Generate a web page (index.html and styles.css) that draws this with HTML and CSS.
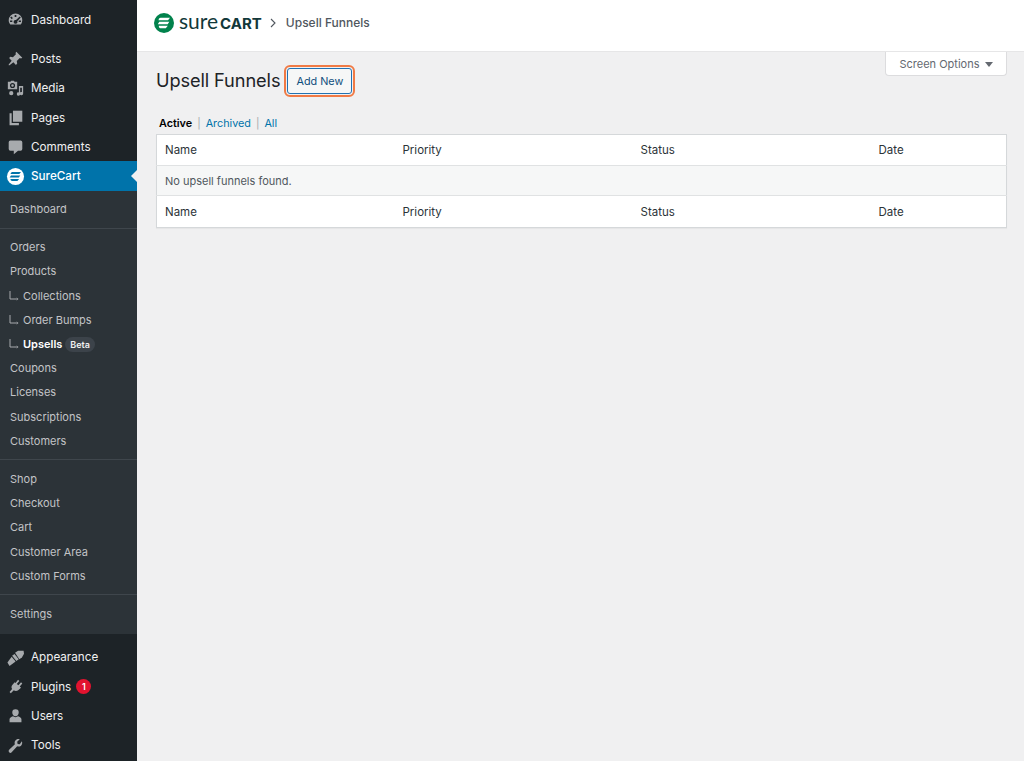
FILE: index.html
```html
<!DOCTYPE html>
<html lang="en">
<head>
<meta charset="utf-8">
<title>Upsell Funnels</title>
<link rel="stylesheet" href="styles.css">
</head>
<body>
<div class="app">
  <nav class="sidebar">
    <a class="top first"><svg class="ico" viewBox="0 0 20 20"><path d="M10 3a8 8 0 0 0-8 8c0 2 .7 3.700 1.900 5h12.200A8 8 0 0 0 18 11a8 8 0 0 0-8-8zM9 4.700h2v2.500H9zM5 6.500l1.900 1.800-1.300 1.300-1.800-1.900zm10 0 1.200 1.200-4.100 4.500a2.200 2.200 0 1 1-1.500-1.500zM3.600 11.200h2.600v1.800H3.600zm10.200 0h2.600v1.800h-2.600z" fill-rule="evenodd"/></svg>Dashboard</a>
    <a class="top gap"><svg class="ico" viewBox="0 0 20 20"><path d="M11 2l7 7-1.500 1-1.500-.5-3.500 3.500.5 3-1.500 1.500-3-3L3 18l-1 0 0-1 3.500-4.500-3-3L4 8l3 .5L10.500 5 10 3.500z"/></svg>Posts</a>
    <a class="top"><svg class="ico" viewBox="0 0 20 20"><path d="M1 2h3l1-1h3l1 1h3v9H1zM6.500 3.500a3 3 0 1 0 0 6 3 3 0 0 0 0-6z M6.500 5a1.500 1.500 0 1 1 0 3 1.500 1.500 0 0 1 0-3z" fill-rule="evenodd"/><path d="M14 7h5v9a2 2 0 1 1-1.500-1.900V9H15.500v7.500a2 2 0 1 1-1.500-1.900zM5 13a2.500 2.500 0 1 1 0 5 2.500 2.500 0 0 1 0-5z"/></svg>Media</a>
    <a class="top"><svg class="ico" viewBox="0 0 20 20"><path d="M7 2h11v13H7z"/><path d="M3 5h2.500v11.500H14V19H3z"/></svg>Pages</a>
    <a class="top"><svg class="ico" viewBox="0 0 20 20"><path d="M4 3h12a2 2 0 0 1 2 2v8a2 2 0 0 1-2 2h-3l-5 4v-4H4a2 2 0 0 1-2-2V5a2 2 0 0 1 2-2z"/></svg>Comments</a>
    <a class="top current"><svg class="ico-sc" viewBox="0 0 20 20"><circle cx="10" cy="10" r="9" fill="#fff"/><path d="M6.500 5.200h9.300l-1.800 2.200H4.800a2.200 2.200 0 0 1 1.700-2.200zM5.300 8.900h9.700l-1.500 2.200H3.800zM4.600 12.600h9.200l-1.800 2.200H6.200a2.200 2.200 0 0 1-1.600-2.200z" fill="#0073aa"/></svg>SureCart</a>
    <div class="sub">
      <a>Dashboard</a>
      <hr>
      <a>Orders</a>
      <a>Products</a>
      <a class="child"><svg class="elbow" viewBox="0 0 10 10"><path d="M1 0v8h6"/><path d="M7.500 6.500l2 1.500-2 1.500z"/></svg>Collections</a>
      <a class="child"><svg class="elbow" viewBox="0 0 10 10"><path d="M1 0v8h6"/><path d="M7.500 6.500l2 1.500-2 1.500z"/></svg>Order Bumps</a>
      <a class="child on"><svg class="elbow" viewBox="0 0 10 10"><path d="M1 0v8h6"/><path d="M7.500 6.500l2 1.500-2 1.500z"/></svg>Upsells<span class="beta">Beta</span></a>
      <a>Coupons</a>
      <a>Licenses</a>
      <a>Subscriptions</a>
      <a>Customers</a>
      <hr>
      <a>Shop</a>
      <a>Checkout</a>
      <a>Cart</a>
      <a>Customer Area</a>
      <a>Custom Forms</a>
      <hr>
      <a>Settings</a>
    </div>
    <a class="top after"><svg class="ico" viewBox="0 0 20 20"><path d="M9.500 4.500 13 2h6.500l.5 3.500L17.500 10l-3 2z"/><path d="M8.800 5.800l5 6.400L11 14 6 8z"/><path d="M5.500 9l4.600 5.600L3 20 .5 16z"/></svg>Appearance</a>
    <a class="top"><svg class="ico" viewBox="0 0 20 20"><path d="M13 2l1.500 1.500L11.500 7l2 1.500L16.500 5 18 6.500l-3 3.500 1.500 1.500-3 2.500c-2 1.700-4 1.500-5.500.5L4.500 18 3 16.500 6 13c-1-1.500-1-3.500.5-5L9 5l1 1z"/></svg>Plugins<span class="count">1</span></a>
    <a class="top"><svg class="ico" viewBox="0 0 20 20"><path d="M10 2.500a3.800 3.800 0 0 1 3.800 4c0 2.300-1.700 4.500-3.800 4.500S6.200 8.800 6.200 6.500a3.800 3.800 0 0 1 3.800-4zM7 11c1.700 1.300 4.300 1.300 6 0 2 .6 4 2 4 3.500V18H3v-3.500C3 13 5 11.600 7 11z"/></svg>Users</a>
    <a class="top"><svg class="ico" viewBox="0 0 20 20"><path d="M17.500 5c.8 2 .3 4-1 5.200-1.200 1.100-3 1.400-4.500.8L5.500 18a2 2 0 0 1-3-.2 2 2 0 0 1 0-2.800L9.300 8.500c-.7-1.700-.3-3.500.9-4.700C11.400 2.500 13.300 2 15 2.600l-3 3 .5 2.500 2.500.5z"/></svg>Tools</a>
  </nav>
  <div class="main">
    <header class="bar">
      <span class="brand"><svg class="brand-mark" viewBox="0 0 20 20"><circle cx="10" cy="10" r="10" fill="#01824c"/><path d="M6.500 4.800h9.500l-2 2.500H4.500a2.500 2.500 0 0 1 2-2.500zM5.300 8.800h10l-1.600 2.400H3.800zM4.800 12.700h9l-2 2.500H6a2.500 2.500 0 0 1-1.200-2.500z" fill="#fff"/></svg><span class="brand-name"><span class="sure">sure</span><span class="cart">CART</span></span></span>
      <svg class="chev" viewBox="0 0 8 10"><path d="M2 1l4 4-4 4"/></svg>
      <span class="crumb">Upsell Funnels</span>
    </header>
    <button class="screen-opts">Screen Options<span class="tri"></span></button>
    <div class="content">
      <div class="heading">
        <h1>Upsell Funnels</h1>
        <a class="add">Add New</a>
      </div>
      <div class="views"><b>Active</b><i>|</i><a>Archived</a><i>|</i><a>All</a></div>
      <table>
        <thead><tr><th>Name</th><th>Priority</th><th>Status</th><th>Date</th></tr></thead>
        <tbody><tr><td colspan="4">No upsell funnels found.</td></tr></tbody>
        <tfoot><tr><th>Name</th><th>Priority</th><th>Status</th><th>Date</th></tr></tfoot>
      </table>
    </div>
  </div>
</div>
</body>
</html>
```
FILE: styles.css
```css
* { box-sizing: border-box; }
html, body { margin: 0; height: 100%; }
body { background: #f0f0f1; font-family: Inter, "Liberation Sans", sans-serif; font-size: 12px; color: #3c434a; overflow: hidden; }
.app { display: flex; height: 761px; }
.sidebar { width: 137px; flex: none; background: #1d2327; display: flex; flex-direction: column; color: #f0f0f1; }
.top { display: flex; align-items: center; height: 29.300px; font-size: 11.700px; padding-left: 31px; position: relative; }
.first { margin-top: 5px; }
.gap { margin-top: 10px; }
.after { margin-top: 9px; }
.ico { position: absolute; left: 7px; top: 6px; width: 17px; height: 17px; fill: #a7aaad; }
.current { background: #0073aa; color: #fff; font-weight: 500; }
.current::after { content: ""; position: absolute; right: 0; top: 9px; border: 6px solid transparent; border-right: 6px solid #f0f0f1; border-left: 0; }
.ico-sc { position: absolute; left: 5.500px; top: 5.500px; width: 19px; height: 19px; }
.sub { background: #2c3338; color: #c3c4c7; font-size: 11px; height: 443px; padding-top: 6.200px; display: flex; flex-direction: column; }
.sub a { display: flex; align-items: center; height: 24.200px; padding-left: 10px; flex: none; }
.sub hr { margin: 6.500px 0; border: 0; border-top: 1px solid #3f464c; width: 100%; flex: none; }
.sub .child { padding-left: 9px; }
.elbow { width: 10px; height: 10px; margin-right: 4px; fill: #a7aaad; stroke: none; }
.elbow path:first-child { fill: none; stroke: #a7aaad; stroke-width: 1; }
.sub .on { color: #fff; font-weight: 600; }
.beta { margin-left: 3px; background: #3c434a; color: #f0f0f1; font-size: 9px; font-weight: 600; border-radius: 8px; padding: 2px 5px; line-height: 11px; }
.count { margin-left: 5px; width: 15px; height: 15px; border-radius: 50%; background: #e2132f; color: #fff; font-size: 9px; font-weight: 600; display: flex; align-items: center; justify-content: center; }
.main { flex: 1; position: relative; min-width: 0; }
.bar { height: 52px; background: #fff; border-bottom: 1px solid #e6e6e7; display: flex; align-items: center; padding: 0 0 6px 17px; }
.brand { display: flex; align-items: center; }
.brand-mark { width: 20px; height: 20px; margin-right: 5px; }
.brand-name { color: #12383a; line-height: 20px; }
.sure { font-weight: 400; font-family: Lato, "Open Sans", sans-serif; font-size: 21px; }
.cart { font-weight: 700; font-family: Inter, sans-serif; font-size: 15px; margin-left: 2px; }
.chev { width: 8px; height: 10px; margin: 0 9px 0 7px; fill: none; stroke: #50575e; stroke-width: 1.100; }
.crumb { font-size: 12px; font-weight: 500; color: #50575e; }
.screen-opts { position: absolute; top: 52px; right: 17px; width: 122px; height: 24px; background: #fff; border: 1px solid #dcdcde; border-top: 0; border-radius: 0 0 4px 4px; font: 11px Inter, sans-serif; color: #646970; display: flex; align-items: center; justify-content: center; gap: 5px; padding: 1px 0 0; }
.tri { border: 4px solid transparent; border-top: 5px solid #646970; border-bottom: 0; }
.content { padding: 14px 17px 0 19px; }
.heading { display: flex; align-items: center; height: 30px; }
h1 { margin: 0 0 2px; font-size: 18.200px; font-weight: 400; color: #1d2327; line-height: 28px; letter-spacing: -.1px; }
.add { margin-left: 7px; width: 65px; height: 26px; display: flex; align-items: center; justify-content: center; font-size: 10.800px; font-weight: 400; color: #0f4e7c; background: #f6f7f7; border: 1px solid #2271b1; border-radius: 3px; outline: 2px solid #f07a45; outline-offset: 1px; }
.views { margin: 20px 0 0 3px; height: 15px; display: flex; align-items: center; font-size: 10.800px; color: #0073aa; }
.views b { color: #000; font-weight: 600; }
.views i { font-style: normal; color: #a7aaad; margin: 0 5px; font-size: 10.500px; }
table { margin: 3px 0 0; width: 851px; border-collapse: collapse; table-layout: fixed; background: #fff; border: 1px solid #d5d8da; box-shadow: 0 1px 1px rgba(0,0,0,.04); font-size: 11.500px; }
th { text-align: left; font-weight: 400; padding: 0 8px; color: #2c3338; width: 238px; }
th:last-child { width: auto; }
thead th { border-bottom: 1px solid #e0e2e3; height: 31px; }
tfoot th { border-top: 1px solid #e0e2e3; height: 32px; }
td { height: 30px; padding: 0 8px; background: #f6f7f7; color: #50575e; font-size: 11px; }
```
